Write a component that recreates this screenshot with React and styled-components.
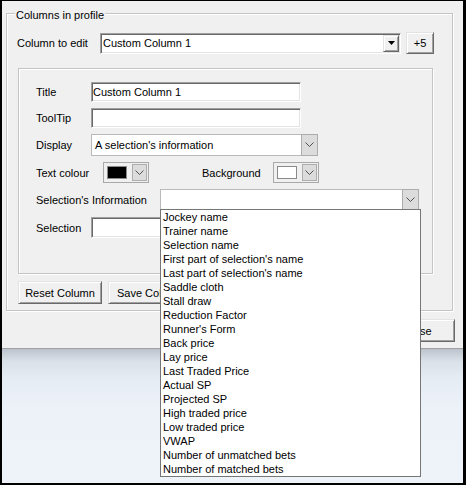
import React from 'react';
import styled, { createGlobalStyle } from 'styled-components';

const GlobalStyle = createGlobalStyle`
  html, body {
    margin: 0;
    padding: 0;
    background: #000;
  }
  * {
    box-sizing: border-box;
  }
`;

const Screen = styled.div`
  width: 466px;
  height: 485px;
  border-style: solid;
  border-color: #000;
  border-width: 1px 3px 2px 2px;
  display: flex;
  flex-direction: column;
  font-family: 'Liberation Sans', Arial, sans-serif;
  font-size: 11px;
  color: #000;
  overflow: hidden;
`;

const Dialog = styled.div`
  background: #f0f0f0;
  border-bottom: 1px solid #a0a0a0;
  padding: 12px 8px 6px 4px;
  display: flex;
  flex-direction: column;
`;

const Desktop = styled.div`
  flex: 1;
  background: linear-gradient(#bcc3cc 0px, #d9e0e8 12px, #e6ecf4 30px, #edf2f9 60px, #eef3fa 100%);
`;

const GroupBox = styled.div`
  position: relative;
  width: 447px;
  height: 298px;
  border: 1px solid #c4c4c4;
  box-shadow: inset 1px 1px 0 #fff, 1px 1px 0 #fff;
  padding: 18px 0 0 10px;
`;

const Caption = styled.span`
  position: absolute;
  top: -5px;
  left: 8px;
  padding: 0 1px;
  background: #f0f0f0;
  line-height: 13px;
`;

const TopRow = styled.div`
  display: flex;
  align-items: center;
  height: 22px;
`;

const Label = styled.span`
  width: ${(p) => p.$w}px;
  flex-shrink: 0;
  white-space: nowrap;
`;

const Sunken = styled.div`
  position: relative;
  width: ${(p) => p.$w}px;
  height: ${(p) => p.$h || 20}px;
  background: #fff;
  border-top: 1px solid #a0a0a0;
  border-left: 1px solid #a0a0a0;
  border-right: 1px solid #fff;
  border-bottom: 1px solid #fff;
  box-shadow: inset 1px 1px 0 #696969, inset -1px -1px 0 #e3e3e3;
  padding-left: ${(p) => p.$pad || 2}px;
  display: flex;
  align-items: center;
  white-space: nowrap;
`;

const ClassicArrow = styled.div`
  position: absolute;
  top: 1px;
  right: 1px;
  bottom: 1px;
  width: 16px;
  background: #f0f0f0;
  border-top: 1px solid #e3e3e3;
  border-left: 1px solid #e3e3e3;
  border-right: 1px solid #696969;
  border-bottom: 1px solid #696969;
  box-shadow: inset 1px 1px 0 #fff, inset -1px -1px 0 #a0a0a0;
  display: flex;
  align-items: center;
  justify-content: center;
`;

const RaisedButton = styled.button`
  width: ${(p) => p.$w}px;
  height: ${(p) => p.$h || 23}px;
  margin: 0;
  padding: 0;
  flex-shrink: 0;
  font: inherit;
  color: #000;
  background: #f0f0f0;
  border-top: 1px solid #e3e3e3;
  border-left: 1px solid #e3e3e3;
  border-right: 1px solid #696969;
  border-bottom: 1px solid #696969;
  box-shadow: inset 1px 1px 0 #fff, inset -1px -1px 0 #a0a0a0;
  white-space: nowrap;
  overflow: hidden;
`;

const PlusButton = styled(RaisedButton)`
  margin-left: 5px;
`;

const Panel = styled.div`
  width: 415px;
  height: 206px;
  margin: 14px 0 0 1px;
  border: 1px solid #c4c4c4;
  box-shadow: inset 1px 1px 0 #fff, 1px 1px 0 #fff;
  padding: 13px 0 0 17px;
  display: flex;
  flex-direction: column;
  gap: 6px;
`;

const FieldRow = styled.div`
  display: flex;
  align-items: center;
  height: ${(p) => p.$h}px;
  margin-top: ${(p) => p.$mt || 0}px;
`;

const FlatCombo = styled.div`
  position: relative;
  width: ${(p) => p.$w}px;
  height: ${(p) => p.$h}px;
  background: #fff;
  border: 1px solid #b9b9b9;
  padding-left: 3px;
  display: flex;
  align-items: center;
  white-space: nowrap;
`;

const FlatArrow = styled.div`
  position: absolute;
  top: -1px;
  right: -1px;
  bottom: -1px;
  width: 17px;
  background: #dcdcdc;
  border: 1px solid #adadad;
  display: flex;
  align-items: center;
  justify-content: center;
`;

const Swatch = styled.div`
  width: 46px;
  height: 21px;
  border: 1px solid #a9a9a9;
  background: #f0f0f0;
  padding: 2px 1px 2px 3px;
  display: flex;
  align-items: stretch;
  gap: 5px;
`;

const SwatchColor = styled.div`
  width: 20px;
  margin: 1px 0;
  background: ${(p) => p.$color};
  border: 1px solid #8a8a8a;
`;

const SwatchArrow = styled.div`
  flex: 1;
  margin-top: -1px;
  margin-bottom: -1px;
  background: #dcdcdc;
  border: 1px solid #adadad;
  display: flex;
  align-items: center;
  justify-content: center;
`;

const BgLabel = styled.span`
  width: 71px;
  margin-left: 53px;
  white-space: nowrap;
`;

const DropList = styled.ul`
  position: absolute;
  top: 100%;
  left: -1px;
  width: 261px;
  margin: 0;
  padding: 0;
  list-style: none;
  background: #fff;
  border: 1px solid #767676;
  z-index: 10;
`;

const DropItem = styled.li`
  height: 14px;
  line-height: 14px;
  padding-left: 2px;
  white-space: nowrap;
`;

const ButtonRow = styled.div`
  display: flex;
  gap: 6px;
  margin: 7px 0 0 1px;
`;

const Footer = styled.div`
  display: flex;
  justify-content: flex-end;
  margin-top: 8px;
`;

const Chevron = () => (
  <svg width="9" height="6" viewBox="0 0 9 6">
    <polyline points="0.5,0.5 4.5,4.5 8.5,0.5" fill="none" stroke="#505050" strokeWidth="1" />
  </svg>
);

const Triangle = () => (
  <svg width="7" height="4" viewBox="0 0 7 4">
    <polygon points="0,0 7,0 3.5,4" fill="#000" />
  </svg>
);

const infoOptions = [
  'Jockey name',
  'Trainer name',
  'Selection name',
  "First part of selection's name",
  "Last part of selection's name",
  'Saddle cloth',
  'Stall draw',
  'Reduction Factor',
  "Runner's Form",
  'Back price',
  'Lay price',
  'Last Traded Price',
  'Actual SP',
  'Projected SP',
  'High traded price',
  'Low traded price',
  'VWAP',
  'Number of unmatched bets',
  'Number of matched bets',
];

export default function App() {
  return (
    <>
      <GlobalStyle />
      <Screen>
        <Dialog>
          <GroupBox>
            <Caption>Columns in profile</Caption>
            <TopRow>
              <Label $w={83}>Column to edit</Label>
              <Sunken $w={301} $h={21} $pad={2}>
                Custom Column 1
                <ClassicArrow>
                  <Triangle />
                </ClassicArrow>
              </Sunken>
              <PlusButton $w={28} $h={22}>+5</PlusButton>
            </TopRow>

            <Panel>
              <FieldRow $h={20}>
                <Label $w={55}>Title</Label>
                <Sunken $w={210} $pad={1}>Custom Column 1</Sunken>
              </FieldRow>
              <FieldRow $h={20}>
                <Label $w={55}>ToolTip</Label>
                <Sunken $w={210} $pad={1} />
              </FieldRow>
              <FieldRow $h={22}>
                <Label $w={55}>Display</Label>
                <FlatCombo $w={227} $h={22}>
                  A selection's information
                  <FlatArrow>
                    <Chevron />
                  </FlatArrow>
                </FlatCombo>
              </FieldRow>
              <FieldRow $h={21}>
                <Label $w={67}>Text colour</Label>
                <Swatch>
                  <SwatchColor $color="#000" />
                  <SwatchArrow>
                    <Chevron />
                  </SwatchArrow>
                </Swatch>
                <BgLabel>Background</BgLabel>
                <Swatch>
                  <SwatchColor $color="#fff" />
                  <SwatchArrow>
                    <Chevron />
                  </SwatchArrow>
                </Swatch>
              </FieldRow>
              <FieldRow $h={21}>
                <Label $w={124}>Selection's Information</Label>
                <FlatCombo $w={259} $h={21}>
                  <FlatArrow>
                    <Chevron />
                  </FlatArrow>
                  <DropList>
                    {infoOptions.map((name) => (
                      <DropItem key={name}>{name}</DropItem>
                    ))}
                  </DropList>
                </FlatCombo>
              </FieldRow>
              <FieldRow $h={21} $mt={1}>
                <Label $w={55}>Selection</Label>
                <Sunken $w={210} $h={21} $pad={1} />
              </FieldRow>
            </Panel>

            <ButtonRow>
              <RaisedButton $w={84}>Reset Column</RaisedButton>
              <RaisedButton $w={84}>Save Column</RaisedButton>
            </ButtonRow>
          </GroupBox>

          <Footer>
            <RaisedButton $w={75}>Close</RaisedButton>
          </Footer>
        </Dialog>
        <Desktop />
      </Screen>
    </>
  );
}
